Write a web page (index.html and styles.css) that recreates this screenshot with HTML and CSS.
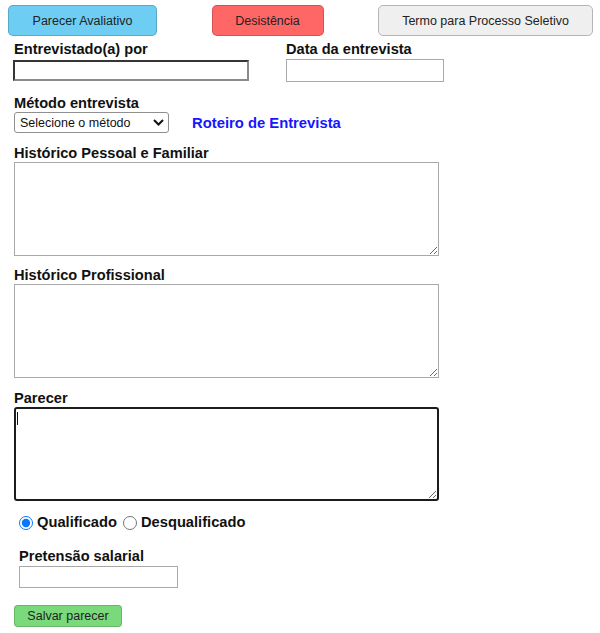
FILE: index.html
```html
<!DOCTYPE html>
<html lang="pt-BR">
<head>
<meta charset="utf-8">
<title>Parecer</title>
<link rel="stylesheet" href="styles.css">
</head>
<body>
<div class="top-bar">
  <button class="btn btn-blue" type="button">Parecer Avaliativo</button>
  <button class="btn btn-red" type="button">Desistência</button>
  <button class="btn btn-gray" type="button">Termo para Processo Seletivo</button>
</div>

<form class="form">
  <div class="row">
    <div class="field field-wide">
      <label class="label">Entrevistado(a) por</label>
      <input class="input input-inset" type="text">
    </div>
    <div class="field">
      <label class="label">Data da entrevista</label>
      <input class="input input-date" type="text">
    </div>
  </div>

  <div class="field field-method">
    <label class="label">Método entrevista</label>
    <div class="method-row">
      <span class="select-wrap">
        <select class="select">
          <option>Selecione o método</option>
        </select>
        <svg class="chevron" width="11" height="7" viewBox="0 0 11 7" aria-hidden="true">
          <path d="M1 1 L5.5 5.5 L10 1" fill="none" stroke="#111" stroke-width="2"/>
        </svg>
      </span>
      <a class="link" href="#">Roteiro de Entrevista</a>
    </div>
  </div>

  <div class="field field-area first-area">
    <label class="label">Histórico Pessoal e Familiar</label>
    <textarea class="textarea"></textarea>
  </div>

  <div class="field field-area">
    <label class="label">Histórico Profissional</label>
    <textarea class="textarea"></textarea>
  </div>

  <div class="field field-area parecer-area">
    <label class="label">Parecer</label>
    <div class="focus-wrap">
      <textarea class="textarea textarea-focus"></textarea>
    </div>
  </div>

  <div class="radios">
    <label class="radio-label"><input class="radio" type="radio" name="q" checked> Qualificado</label>
    <label class="radio-label"><input class="radio" type="radio" name="q"> Desqualificado</label>
  </div>

  <div class="field field-salary">
    <label class="label">Pretensão salarial</label>
    <input class="input input-salary" type="text">
  </div>

  <button class="btn btn-green" type="button">Salvar parecer</button>
</form>
</body>
</html>
```

FILE: styles.css
```css
* {
  box-sizing: border-box;
}

body {
  margin: 0;
  background: #ffffff;
  font-family: "Liberation Sans", Arial, sans-serif;
  color: #111111;
}

.top-bar {
  display: flex;
  justify-content: space-between;
  padding: 5px 7px 0 8px;
}

.btn {
  height: 31px;
  padding: 0;
  border: 1px solid rgba(0, 0, 0, 0.18);
  border-radius: 5px;
  font-family: "Liberation Sans", Arial, sans-serif;
  font-size: 12.5px;
  color: #222222;
  cursor: pointer;
}

.btn-blue {
  width: 149px;
  background: #6dcdf3;
}

.btn-red {
  width: 112px;
  background: #ff6666;
}

.btn-gray {
  width: 215px;
  background: #efefef;
  border-color: #b5b5b5;
}

.form {
  padding: 0 0 0 14px;
}

.row {
  display: flex;
  align-items: flex-start;
  margin-top: 5px;
}

.field {
  display: flex;
  flex-direction: column;
  align-items: flex-start;
}

.field-wide {
  width: 272px;
}

.label {
  display: block;
  font-size: 14.6px;
  line-height: 17px;
  font-weight: bold;
  color: #111111;
}

.input {
  display: block;
  font-family: "Liberation Sans", Arial, sans-serif;
  font-size: 12.5px;
  background: #ffffff;
  padding: 0 3px;
  margin: 0;
}

.input-inset {
  width: 236px;
  height: 21px;
  margin-top: 2px;
  border: 2px inset #8a8a8a;
  margin-left: -1px;
}

.input-date {
  width: 158px;
  height: 23px;
  margin-top: 1px;
  border: 1px solid #a9a9a9;
}

.field-method {
  margin-top: 13px;
}

.method-row {
  display: flex;
  align-items: center;
}

.select-wrap {
  position: relative;
  display: block;
}

.select {
  display: block;
  width: 155px;
  height: 21px;
  margin: 0;
  padding: 0 20px 0 5px;
  border: 1px solid #8f8f8f;
  border-radius: 3px;
  background: #ffffff;
  font-family: "Liberation Sans", Arial, sans-serif;
  font-size: 12.5px;
  color: #111111;
  appearance: none;
  -webkit-appearance: none;
}

.chevron {
  position: absolute;
  right: 5px;
  top: 7px;
  pointer-events: none;
}

.link {
  margin-left: 23px;
  font-size: 14.8px;
  font-weight: bold;
  color: #1616ff;
  text-decoration: none;
}

.field-area {
  margin-top: 11px;
}

.first-area {
  margin-top: 12px;
}

.parecer-area {
  margin-top: 12px;
}

.textarea {
  display: block;
  width: 425px;
  height: 94px;
  margin: 0;
  border: 1px solid #a9a9a9;
  font-family: "Liberation Sans", Arial, sans-serif;
  font-size: 12.5px;
}

.focus-wrap {
  position: relative;
}

.focus-wrap::after {
  content: "";
  position: absolute;
  left: 3px;
  top: 5px;
  width: 1px;
  height: 13px;
  background: #111111;
}

.textarea-focus {
  border: 2px solid #1c1c1c;
  border-radius: 3px;
  outline: none;
}

.radios {
  display: flex;
  align-items: center;
  margin-top: 12px;
  padding-left: 5px;
  height: 18px;
}

.radio-label {
  display: flex;
  align-items: center;
  font-size: 14.7px;
  font-weight: bold;
  line-height: 17px;
  margin-right: 6px;
}

.radio {
  width: 14px;
  height: 14px;
  margin: 2px 4px 0 0;
  accent-color: #0a75ff;
}

.field-salary {
  margin-top: 17px;
  padding-left: 5px;
}

.input-salary {
  width: 159px;
  height: 22px;
  margin-top: 1px;
  border: 1px solid #a9a9a9;
}

.btn-green {
  display: block;
  width: 108px;
  height: 22px;
  margin-top: 17px;
  background: #7ad97a;
  border-color: rgba(0, 0, 0, 0.15);
  border-radius: 4px;
  font-size: 12.5px;
}
```
